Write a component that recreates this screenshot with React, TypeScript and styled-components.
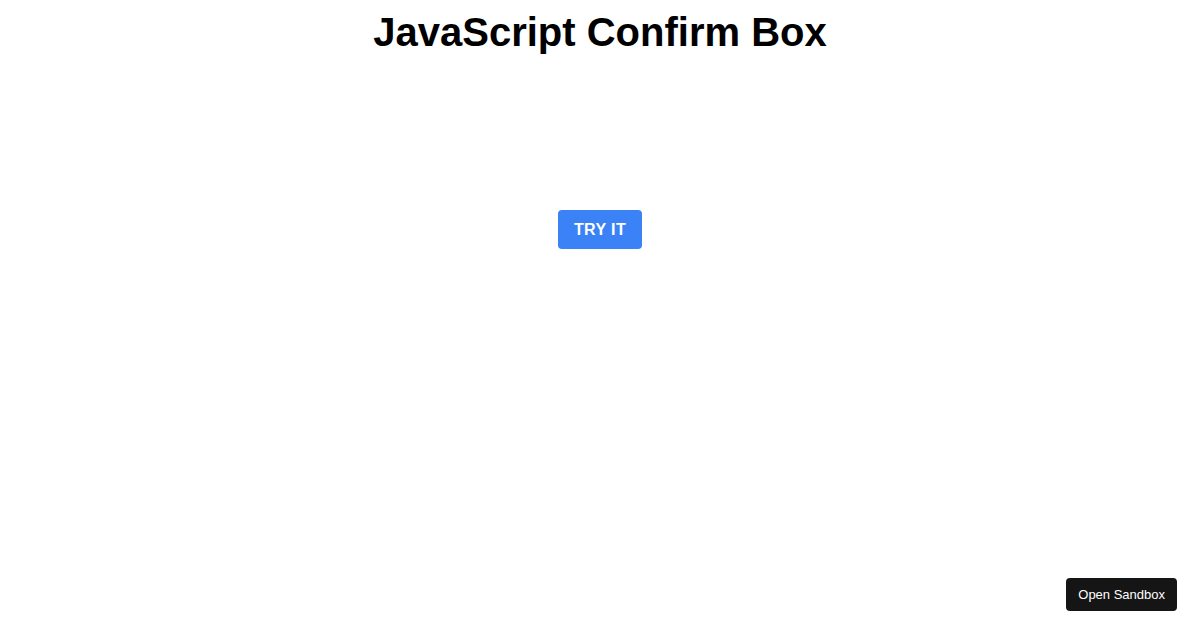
import * as React from 'react';
import styled, { createGlobalStyle } from 'styled-components';

const GlobalStyle = createGlobalStyle`
  body {
    margin: 0;
    background: #ffffff;
    font-family: 'Liberation Sans', Arial, sans-serif;
  }
`;

const Page = styled.main`
  display: flex;
  flex-direction: column;
  align-items: center;
  width: 100%;
  height: 630px;
`;

const Title = styled.h1`
  margin: 9px 0 0;
  font-size: 40px;
  font-weight: 700;
  line-height: 46px;
  color: #000000;
`;

const TryButton = styled.button`
  margin-top: 155px;
  padding: 0 16px;
  height: 39px;
  border: none;
  border-radius: 4px;
  background: #3b82f6;
  color: #ffffff;
  font-family: 'Liberation Sans', Arial, sans-serif;
  font-size: 16px;
  font-weight: 700;
  letter-spacing: 0.4px;
  cursor: pointer;
`;

const SandboxLink = styled.a`
  position: fixed;
  right: 23px;
  bottom: 19px;
  display: flex;
  align-items: center;
  height: 33px;
  padding: 0 12px;
  border-radius: 4px;
  background: #151515;
  color: #ffffff;
  font-size: 13px;
  text-decoration: none;
`;

export default function App() {
  return (
    <>
      <GlobalStyle />
      <Page>
        <Title>JavaScript Confirm Box</Title>
        <TryButton>TRY IT</TryButton>
      </Page>
      <SandboxLink href="#">Open Sandbox</SandboxLink>
    </>
  );
}
